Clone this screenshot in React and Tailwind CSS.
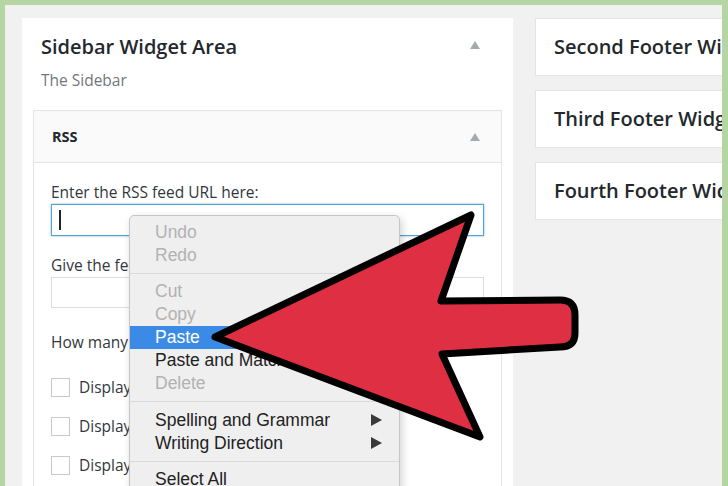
import React from "react";

const sans = { fontFamily: '"Open Sans", "Noto Sans", sans-serif' };
const helv = { fontFamily: '"Liberation Sans", Arial, sans-serif' };

function Tri({ className = "" }) {
  return (
    <svg width="10" height="8" viewBox="0 0 10 8" className={className}>
      <polygon points="5,0 10,8 0,8" fill="#a7aaad" />
    </svg>
  );
}

function Item({ label, disabled, active, sub }) {
  return (
    <div
      className={`h-[23px] flex items-center justify-between pl-[25px] pr-[17px] ${
        active ? "bg-[#3b8be6] text-white" : disabled ? "text-[#b2b2b2]" : "text-[#222]"
      }`}
    >
      <span>{label}</span>
      {sub && (
        <svg width="11" height="12" viewBox="0 0 11 12">
          <polygon points="0,0 11,6 0,12" fill="#3a3a3a" />
        </svg>
      )}
    </div>
  );
}

function Sep() {
  return (
    <div className="h-[13.5px] flex items-center">
      <div className="w-full h-px bg-[#dadada]" />
    </div>
  );
}

function Check({ label }) {
  return (
    <div className="flex items-center gap-[9px] h-[19px]">
      <div className="w-[19px] h-[19px] border border-[#c9c9c9] bg-white" />
      <span className="text-[15.5px] text-[#32373c]">{label}</span>
    </div>
  );
}

export default function App() {
  return (
    <div className="relative w-[728px] h-[486px] overflow-hidden bg-[#b5d6a3] pt-[5px] pl-[5px] pr-[6px]" style={sans}>
      <div className="w-full h-full bg-[#f1f1f1] overflow-hidden pt-[13px] pl-[17px] flex gap-[22px]">
        {/* Left panel */}
        <div className="w-[491px] shrink-0 bg-white h-[520px] px-[11px]">
          <div className="pl-[8px] pr-[22px]">
            <div className="pt-[15px] flex items-center justify-between h-[43px]">
              <span className="text-[20px] leading-[28px] font-semibold text-[#23282d]">Sidebar Widget Area</span>
              <Tri className="mt-[-4px]" />
            </div>
            <div className="mt-[9px] text-[15.5px] leading-[20px] text-[#72777c]">The Sidebar</div>
          </div>
          <div className="mt-[20px] border border-[#e2e4e7] h-[420px]">
            <div className="h-[52px] bg-[#fafafa] border-b border-[#e2e4e7] flex items-center justify-between pl-[18px] pr-[21px]">
              <span className="text-[14.5px] font-bold text-[#23282d]">RSS</span>
              <Tri />
            </div>
            <div className="px-[17px] pt-[19px] text-[15.5px] text-[#32373c]">
              <div className="leading-[20px]">Enter the RSS feed URL here:</div>
              <div className="mt-[2px] h-[32px] border border-[#5b9dd9] shadow-[0_0_2px_rgba(30,140,190,0.6)] flex items-center pl-[7px]">
                <div className="w-[1.5px] h-[20px] bg-[#222]" />
              </div>
              <div className="mt-[19px] leading-[20px]">Give the feed a title (optional):</div>
              <div className="mt-[2px] h-[31px] border border-[#dddddd]" />
              <div className="mt-[24px] leading-[20px]">How many items would you like to display?</div>
              <div className="mt-[26px] flex flex-col gap-[20px]">
                <Check label="Display item content?" />
                <Check label="Display item author if available?" />
                <Check label="Display item date?" />
              </div>
            </div>
          </div>
        </div>
        {/* Right column */}
        <div className="w-[300px] shrink-0 flex flex-col gap-[14px]">
          {["Second Footer Widget Area", "Third Footer Widget Area", "Fourth Footer Widget Area"].map((t) => (
            <div key={t} className="h-[58px] bg-white border border-[#e5e5e5] flex items-center pl-[18px] whitespace-nowrap">
              <span className="text-[20px] font-semibold text-[#23282d]">{t}</span>
            </div>
          ))}
        </div>
      </div>

      {/* Context menu */}
      <div
        className="absolute left-[129px] top-[215px] w-[271px] h-[290px] bg-[#efefef] border border-[#c6c6c6] rounded-[5px] pt-[4.5px] text-[17.5px] shadow-[2px_3px_8px_rgba(0,0,0,0.18)]"
        style={helv}
      >
        <Item label="Undo" disabled />
        <Item label="Redo" disabled />
        <Sep />
        <Item label="Cut" disabled />
        <Item label="Copy" disabled />
        <Item label="Paste" active />
        <Item label="Paste and Match Style" />
        <Item label="Delete" disabled />
        <Sep />
        <Item label="Spelling and Grammar" sub />
        <Item label="Writing Direction" sub />
        <Sep />
        <Item label="Select All" />
      </div>

      {/* Red arrow */}
      <svg className="absolute left-0 top-0" width="728" height="486" viewBox="0 0 728 486">
        <path
          d="M215,337 L471,215 L441,301 L560,300 Q575,300 575,315 L575,333 Q575,347 560,347 L442,354 L480,437 Z"
          fill="#df2f42"
          stroke="#000"
          strokeWidth="7"
          strokeLinejoin="round"
        />
      </svg>
    </div>
  );
}
